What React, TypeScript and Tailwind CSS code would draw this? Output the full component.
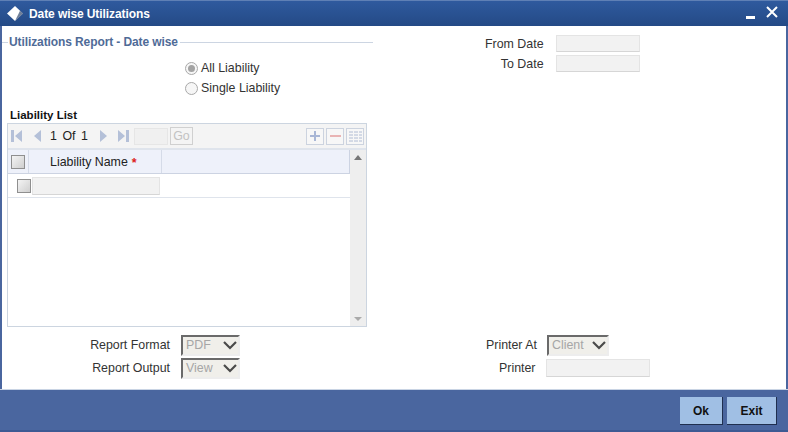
const SANS = "font-['Liberation_Sans',Arial,sans-serif]"

function SkipIcon({ dir, className }: { dir: 'first' | 'prev' | 'next' | 'last'; className?: string }) {
  return (
    <svg width="12" height="14" viewBox="0 0 12 14" className={className} fill="#b4c0d8">
      {dir === 'first' && <path d="M0 1h3v12H0zM11 1v12L4 7z" />}
      {dir === 'prev' && <path d="M9 1v12L2 7z" />}
      {dir === 'next' && <path d="M2 1v12l7-6z" />}
      {dir === 'last' && <path d="M9 1h3v12H9zM1 1v12l7-6z" />}
    </svg>
  )
}

function TextBox({ className }: { className: string }) {
  return <div className={`border border-[#e4e4e4] border-b-[#d6d6d6] bg-[#f2f2f2] ${className}`} />
}

function Radio({ checked, label }: { checked?: boolean; label: string }) {
  return (
    <div className="flex h-5 items-center">
      <span className="flex h-[13px] w-[13px] items-center justify-center rounded-full border border-[#a9a9a9] bg-[#f6f6f6]">
        {checked && <span className="h-[7px] w-[7px] rounded-full bg-[#a3a3a3]" />}
      </span>
      <span className="ml-[3px] text-[12.4px] text-[#333]">{label}</span>
    </div>
  )
}

function Select({ value, width }: { value: string; width: string }) {
  return (
    <div className={`flex h-[21px] items-center justify-between border-2 border-[#ededed] border-t-[#6a6a6a] border-l-[#6a6a6a] bg-[#f0efea] pl-[3px] pr-[1px] ${width}`}>
      <span className="text-[12.4px] text-[#a6a6a6]">{value}</span>
      <svg width="14" height="9" viewBox="0 0 14 9">
        <path d="M1 1l6 6 6-6" fill="none" stroke="#4a4a4a" strokeWidth="2.2" />
      </svg>
    </div>
  )
}

function ToolButton({ children }: { children: React.ReactNode }) {
  return (
    <div className="flex h-[17px] w-[18px] items-center justify-center border border-[#ccd3df] bg-[#f7f7f7]">
      {children}
    </div>
  )
}

function Check({ className }: { className?: string }) {
  return (
    <div className={`h-[14px] w-[14px] border border-[#8f8f8f] bg-gradient-to-br from-[#f4f4f4] to-[#cfcfcf] ${className ?? ''}`} />
  )
}

export default function App() {
  return (
    <div className={`flex h-[432px] w-[788px] flex-col bg-white ${SANS}`}>
      {/* title bar */}
      <div className="flex h-[26px] items-center border-t border-t-[#5f80b5] bg-gradient-to-b from-[#2f5a9e] to-[#244a86] pl-[7px] pr-[10px]">
        <svg width="16" height="15" viewBox="0 0 16 15">
          <path d="M8 0l8 7.5L8 15 0 7.5z" fill="#fff" />
          <path d="M8 15l8-7.5-3-2.8z" fill="#0f2a55" opacity="0.6" />
        </svg>
        <span className="ml-[6px] text-xs font-bold tracking-[-0.09px] text-white">Date wise Utilizations</span>
        <div className="ml-auto flex items-center gap-[11px]">
          <div className="mt-[7px] h-[3px] w-[9px] bg-white" />
          <svg width="12" height="12" viewBox="0 0 12 12" className="mb-[3px]">
            <path d="M1 1l10 10M11 1L1 11" stroke="#fff" strokeWidth="2" />
          </svg>
        </div>
      </div>

      {/* body */}
      <div className="flex flex-1 flex-col border-x-2 border-[#4a669f] pl-[5px] text-[12.4px] text-[#333]">
        <div className="flex">
          <div className="w-[366px]">
            <div className="-ml-[5px] mt-[8px] flex h-[16px] items-center">
              <div className="h-px w-[6px] bg-[#ccd5e2]" />
              <span className="ml-px text-xs font-bold tracking-[-0.1px] text-[#4f6b97]">Utilizations Report - Date wise</span>
              <div className="ml-[2px] h-px flex-1 bg-[#ccd5e2]" />
            </div>
            <div className="ml-[178px] mt-[8px]">
              <Radio checked label="All Liability" />
              <Radio label="Single Liability" />
            </div>
          </div>
          <div className="ml-[112px] mt-[9px] flex flex-col gap-[3px]">
            <div className="flex h-[17px] items-center justify-end">
              <span className="mr-[12px] pt-px">From Date</span>
              <TextBox className="h-[17px] w-[84px]" />
            </div>
            <div className="flex h-[17px] items-center justify-end">
              <span className="mr-[12px] pt-px">To Date</span>
              <TextBox className="h-[17px] w-[84px]" />
            </div>
          </div>
        </div>

        {/* liability list */}
        <div className="ml-[3px] mt-[10px] h-[15px] text-[11.5px] font-bold leading-[15px] text-[#111]">Liability List</div>
        <div className="h-[204px] w-[360px] border border-[#ccd5e0]">
          <div className="flex h-[26px] items-center border-b-2 border-[#dfe4ec] bg-[#f4f4f4] pl-[3px] pr-[2px]">
            <SkipIcon dir="first" />
            <SkipIcon dir="prev" className="ml-[9px]" />
            <span className="ml-[6px] flex w-[38px] justify-between text-[12.4px] text-[#222]">
              <span>1</span>
              <span>Of</span>
              <span>1</span>
            </span>
            <SkipIcon dir="next" className="ml-[10px]" />
            <SkipIcon dir="last" className="ml-[7px]" />
            <div className="ml-[5px] h-[17px] w-[34px] border border-[#e6e6e6] bg-[#f0f0f0]" />
            <div className="ml-[2px] flex h-[18px] w-[23px] items-center justify-center border border-[#d0d0d0] text-[12.4px] text-[#c2c2c2]">Go</div>
            <div className="ml-auto flex gap-[2px]">
              <ToolButton>
                <svg width="12" height="12" viewBox="0 0 12 12"><path d="M6 1v10M1 6h10" stroke="#a9b7d6" strokeWidth="2" /></svg>
              </ToolButton>
              <ToolButton>
                <div className="h-[2px] w-[11px] bg-[#e9b4b4]" />
              </ToolButton>
              <ToolButton>
                <svg width="13" height="11" viewBox="0 0 13 11"><path d="M0 1h13M0 4h13M0 7h13M0 10h13" stroke="#b0bcd4" strokeDasharray="4 1" /></svg>
              </ToolButton>
            </div>
          </div>
          <div className="flex h-[176px]">
            <div className="flex-1">
              <div className="flex h-[24px] items-center border-b border-r border-[#ccd3e2] bg-[#eef1fa]">
                <div className="flex h-full w-[21px] items-center justify-center border-r border-[#d5dbe8]">
                  <Check />
                </div>
                <div className="flex h-full w-[133px] items-center border-r border-[#d5dbe8] pl-[21px] pt-[2px] text-[12.4px] text-[#222]">
                  <span>Liability Name</span>
                  <span className="ml-[4px] mt-[2px] font-bold text-[#d22]">*</span>
                </div>
              </div>
              <div className="flex h-[24px] items-center border-b border-[#dfe4ec] pl-[9px]">
                <Check className="mt-[1px]" />
                <TextBox className="ml-[1px] h-[18px] w-[128px]" />
              </div>
            </div>
            <div className="flex w-[16px] flex-col items-center justify-between bg-[#eeeeee] py-[5px]">
              <div className="h-0 w-0 border-x-[4px] border-b-[5px] border-x-transparent border-b-[#777]" />
              <div className="h-0 w-0 border-x-[4px] border-t-[4px] border-x-transparent border-t-[#aaa]" />
            </div>
          </div>
        </div>

        {/* report options */}
        <div className="mt-[8px] flex">
          <div className="flex w-[233px] flex-col gap-[2px]">
            <div className="flex items-center justify-end">
              <span className="mr-[11px]">Report Format</span>
              <Select value="PDF" width="w-[59px]" />
            </div>
            <div className="flex items-center justify-end">
              <span className="mr-[11px]">Report Output</span>
              <Select value="View" width="w-[59px]" />
            </div>
          </div>
          <div className="ml-[246px] flex flex-col gap-[3px]">
            <div className="flex items-center">
              <span className="mr-[10px]">Printer At</span>
              <Select value="Client" width="w-[62px]" />
            </div>
            <div className="flex items-center justify-start">
              <span className="ml-[13px] mr-[10px]">Printer</span>
              <TextBox className="h-[18px] w-[104px]" />
            </div>
          </div>
        </div>
      </div>

      {/* footer */}
      <div className="flex h-[43px] items-start justify-end gap-[4px] border-t border-t-[#c9d4e4] border-b-2 border-b-[#3d5a93] bg-[#4a669f] pr-[11px] pt-[7px]">
        <button className="h-[28px] w-[43px] border-r border-b border-[#1f2f4f] bg-[#a0bfe4] text-xs font-bold text-[#111]">Ok</button>
        <button className="h-[28px] w-[50px] border-r border-b border-[#1f2f4f] bg-[#a0bfe4] text-xs font-bold text-[#111]">Exit</button>
      </div>
    </div>
  )
}
